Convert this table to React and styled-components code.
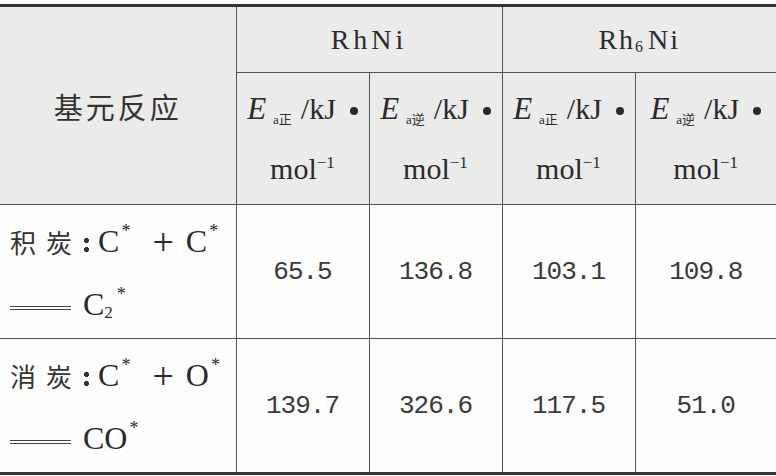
import React from "react";
import styled, { createGlobalStyle } from "styled-components";

const Global = createGlobalStyle`
  html, body {
    margin: 0;
    padding: 0;
    background: #fdfdfc;
  }
  body {
    width: 776px;
    height: 476px;
    overflow: hidden;
    font-family: "Liberation Serif", "Noto Sans CJK SC", serif;
    color: #2a2a2a;
  }
  table, th, td {
    font-family: "Liberation Serif", "Noto Sans CJK SC", serif;
  }
`;

const Table = styled.table`
  margin-top: 4px;
  width: 776px;
  table-layout: fixed;
  border-collapse: collapse;
  border-top: 3px solid #333;
  border-bottom: 3px solid #333;
  color: #2a2a2a;
`;

const HeadCell = styled.th`
  background: #ebebea;
  font-weight: normal;
  height: ${(p) => p.h}px;
  padding: 0;
  text-align: center;
  vertical-align: middle;
  border-left: ${(p) => (p.first ? "none" : "1.5px solid #555")};
  border-bottom: 1.5px solid #555;
`;

const Cell = styled.td`
  height: ${(p) => p.h}px;
  padding: 0;
  text-align: center;
  vertical-align: middle;
  border-left: 1.5px solid #555;
  border-top: 1.5px solid #555;
`;

const ReactCell = styled(Cell)`
  border-left: none;
  text-align: left;
  padding-left: 10px;
`;

const Cn = styled.span`
  font-family: "Noto Sans CJK SC", sans-serif;
  font-size: ${(p) => p.size || 26}px;
  font-weight: 400;
  letter-spacing: ${(p) => p.gap || 0}px;
  margin-right: ${(p) => p.after || 0}px;
  color: #333;
`;

const Colon = styled.span`
  display: inline-block;
  width: 5px;
  height: 14px;
  margin: 6px 9px 0 12px;
  background: radial-gradient(circle at 2.5px 2.5px, #333 2.4px, transparent 2.6px),
    radial-gradient(circle at 2.5px 11.5px, #333 2.4px, transparent 2.6px);
`;

const Alloy = styled.span`
  font-family: "Liberation Serif", serif;
  font-size: 28px;
  letter-spacing: ${(p) => p.gap || 0}px;
`;

const Sub = styled.span`
  font-size: ${(p) => p.size || 13}px;
  position: relative;
  top: ${(p) => p.drop || 4}px;
  letter-spacing: 0;
  margin-right: ${(p) => p.after || 0}px;
`;

const Sup = styled.span`
  font-size: ${(p) => p.size || 14}px;
  position: relative;
  top: ${(p) => -(p.rise || 10)}px;
  margin: 0 ${(p) => p.after || 0}px 0 ${(p) => p.before || 0}px;
`;

const UnitBox = styled.div`
  display: flex;
  flex-direction: column;
  align-items: center;
`;

const UnitLine = styled.div`
  height: 60px;
  line-height: 60px;
  font-family: "Liberation Serif", serif;
  font-size: 30px;
  white-space: nowrap;
`;

const Ital = styled.i`
  font-size: 31px;
`;

const SubCn = styled.span`
  font-family: "Liberation Serif", "Noto Sans CJK SC", serif;
  font-size: 13px;
  position: relative;
  top: 5px;
  margin: 0 9px 0 7px;
`;

const Dot = styled.span`
  display: inline-block;
  width: 8px;
  height: 8px;
  border-radius: 50%;
  background: #2a2a2a;
  margin-left: 14px;
  vertical-align: 4px;
`;

const Line = styled.div`
  height: 66px;
  padding-top: ${(p) => p.shift || 0}px;
  box-sizing: border-box;
  font-family: "Liberation Serif", serif;
  font-size: 32px;
  white-space: nowrap;
  display: flex;
  align-items: center;
`;

const Plus = styled.span`
  font-size: 38px;
  font-weight: 300;
  margin: 0 12px 0 22px;
`;

const Equals = styled.span`
  display: inline-block;
  width: 61px;
  height: 2px;
  border-top: 1.5px solid #444;
  border-bottom: 1.5px solid #444;
  margin: 6px 12px 0 0;
`;

const Num = styled.span`
  font-family: "Liberation Mono", monospace;
  font-size: 26px;
  font-weight: 400;
  letter-spacing: -1px;
  color: #3a3a3a;
`;

const unit = (dir) => (
  <UnitBox>
    <UnitLine>
      <Ital>E</Ital>
      <SubCn>a{dir}</SubCn>/kJ
      <Dot />
    </UnitLine>
    <UnitLine>
      mol<Sup size={17} rise={11}>−1</Sup>
    </UnitLine>
  </UnitBox>
);

const star = (before = 2) => (
  <Sup size={18} rise={10} before={before}>
    *
  </Sup>
);

const rows = [
  {
    name: "积",
    lead: "C",
    values: ["65.5", "136.8", "103.1", "109.8"],
    product: (
      <>
        C<Sub size={17} drop={8} after={4}>2</Sub>
        {star(0)}
      </>
    ),
  },
  {
    name: "消",
    lead: "O",
    values: ["139.7", "326.6", "117.5", "51.0"],
    product: <>CO{star(2)}</>,
  },
];

export default function App() {
  return (
    <>
      <Global />
      <Table>
        <colgroup>
          <col style={{ width: 236 }} />
          <col style={{ width: 133 }} />
          <col style={{ width: 133 }} />
          <col style={{ width: 133 }} />
          <col style={{ width: 141 }} />
        </colgroup>
        <thead>
          <tr>
            <HeadCell first rowSpan={2} h={65}>
              <Cn size={29} gap={3}>
                基元反应
              </Cn>
            </HeadCell>
            <HeadCell colSpan={2} h={65}>
              <Alloy gap={4}>RhNi</Alloy>
            </HeadCell>
            <HeadCell colSpan={2} h={65}>
              <Alloy gap={2}>
                Rh<Sub size={16} drop={3} after={5}>6</Sub>Ni
              </Alloy>
            </HeadCell>
          </tr>
          <tr>
            <HeadCell h={131}>{unit("正")}</HeadCell>
            <HeadCell h={131}>{unit("逆")}</HeadCell>
            <HeadCell h={131}>{unit("正")}</HeadCell>
            <HeadCell h={131}>{unit("逆")}</HeadCell>
          </tr>
        </thead>
        <tbody>
          {rows.map((r) => (
            <tr key={r.name}>
              <ReactCell h={133}>
                <Line shift={6}>
                  <Cn after={10}>{r.name}</Cn>
                  <Cn>炭</Cn>
                  <Colon />
                  C{star()}
                  <Plus>+</Plus>
                  {r.lead}
                  {star()}
                </Line>
                <Line>
                  <Equals />
                  {r.product}
                </Line>
              </ReactCell>
              {r.values.map((v, i) => (
                <Cell key={i} h={133}>
                  <Num>{v}</Num>
                </Cell>
              ))}
            </tr>
          ))}
        </tbody>
      </Table>
    </>
  );
}
